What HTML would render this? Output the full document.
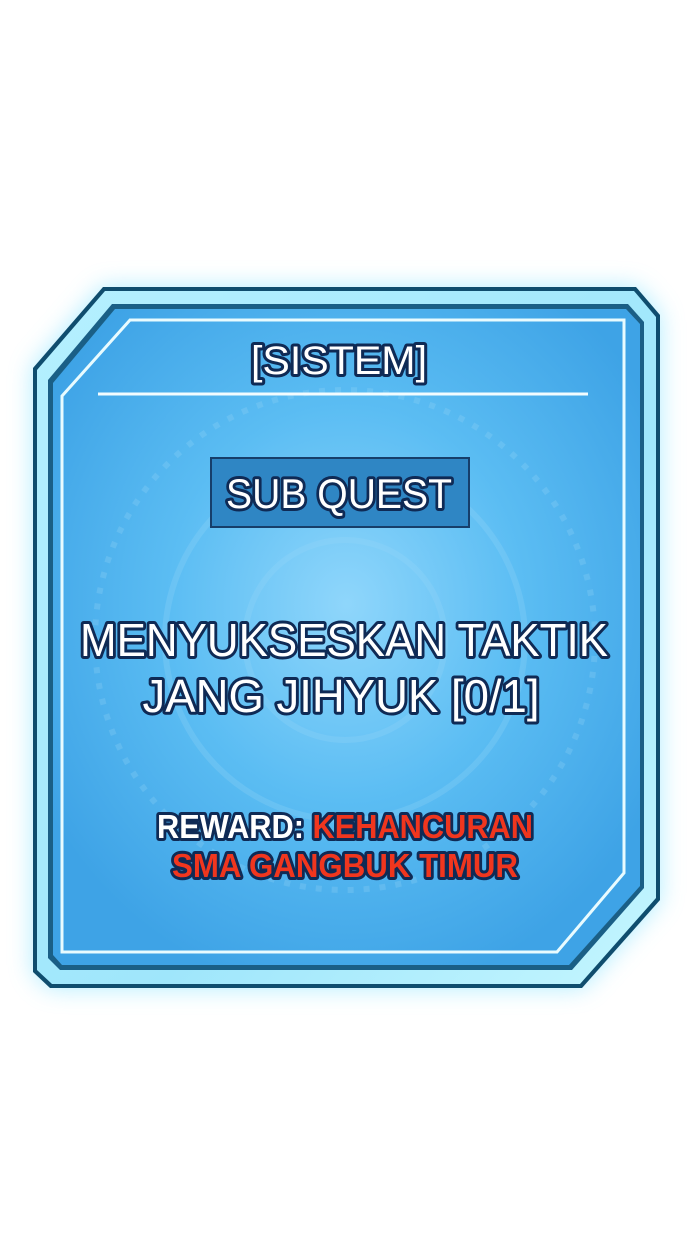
<!DOCTYPE html>
<html><head><meta charset="utf-8"><style>
html,body{margin:0;padding:0;background:#fff;width:690px;height:1240px;overflow:hidden}
svg{display:block}
text{font-family:"Liberation Sans",sans-serif;paint-order:stroke;stroke-linejoin:round}
</style></head><body>
<svg width="690" height="1240" viewBox="0 0 690 1240">
<defs>
<radialGradient id="bg" cx="0.5" cy="0.45" r="0.6">
<stop offset="0" stop-color="#8fd6fb"/>
<stop offset="0.5" stop-color="#5bbdf3"/>
<stop offset="1" stop-color="#3ea3e6"/>
</radialGradient>
<linearGradient id="band" x1="0" y1="0" x2="1" y2="1">
<stop offset="0" stop-color="#b5f0ff"/>
<stop offset="0.6" stop-color="#9fe6fb"/>
<stop offset="1" stop-color="#c4f6ff"/>
</linearGradient>
<filter id="glow" x="-20%" y="-20%" width="140%" height="140%"><feGaussianBlur stdDeviation="12"/></filter>
</defs>
<polygon points="33,368 103,287 636,287 660,315 660,900 582,988 50,988 33,972" fill="#9ee8ff" filter="url(#glow)" opacity="0.8"/>
<polygon points="33,368 103,287 636,287 660,315 660,900 582,988 50,988 33,972" fill="#0f4d6e"/>
<polygon points="37,370 105,291 634,291 656,317 656,898 580,984 52,984 37,970" fill="url(#band)"/>
<polygon points="48,380 112,304 628,304 644,322 644,888 572,970 60,970 48,958" fill="#1a5f86"/>
<polygon points="53,383 115,309 626,309 640,324 640,886 569,965 62,965 53,955" fill="url(#bg)"/>
<polygon points="62,396 130,320 624,320 624,873 557,952 62,952" fill="none" stroke="#e8fbff" stroke-width="3"/>
<g fill="none" stroke="#9ad8f8" stroke-width="6" opacity="0.25">
<circle cx="345" cy="640" r="100"/>
<circle cx="345" cy="640" r="180"/>
<circle cx="345" cy="640" r="250" stroke-dasharray="6 10"/>
</g>
<line x1="98" y1="394" x2="588" y2="394" stroke="#f2fcff" stroke-width="3"/>
<text x="339" y="374" text-anchor="middle" font-size="40" fill="#fff" stroke="#0f2a55" stroke-width="6" textLength="176" lengthAdjust="spacingAndGlyphs">[SISTEM]</text>
<rect x="211" y="458" width="258" height="69" fill="#2f86c4" stroke="#163e6a" stroke-width="2"/>
<text x="339" y="508" text-anchor="middle" font-size="42" fill="#fff" stroke="#0f2a55" stroke-width="6" textLength="226" lengthAdjust="spacingAndGlyphs">SUB QUEST</text>
<text x="344" y="656" text-anchor="middle" font-size="46" fill="#fff" stroke="#0f2a55" stroke-width="6" textLength="528" lengthAdjust="spacingAndGlyphs">MENYUKSESKAN TAKTIK</text>
<text x="341" y="712" text-anchor="middle" font-size="46" fill="#fff" stroke="#0f2a55" stroke-width="6" textLength="397" lengthAdjust="spacingAndGlyphs">JANG JIHYUK  [0/1]</text>
<text x="157" y="838" font-size="33" font-weight="bold" stroke="#0f2a55" stroke-width="6" textLength="376" lengthAdjust="spacingAndGlyphs"><tspan fill="#fff">REWARD: </tspan><tspan fill="#f0361e">KEHANCURAN</tspan></text>
<text x="345" y="877" text-anchor="middle" font-size="33" font-weight="bold" fill="#f0361e" stroke="#0f2a55" stroke-width="6" textLength="346" lengthAdjust="spacingAndGlyphs">SMA GANGBUK TIMUR</text>
</svg>
</body></html>
